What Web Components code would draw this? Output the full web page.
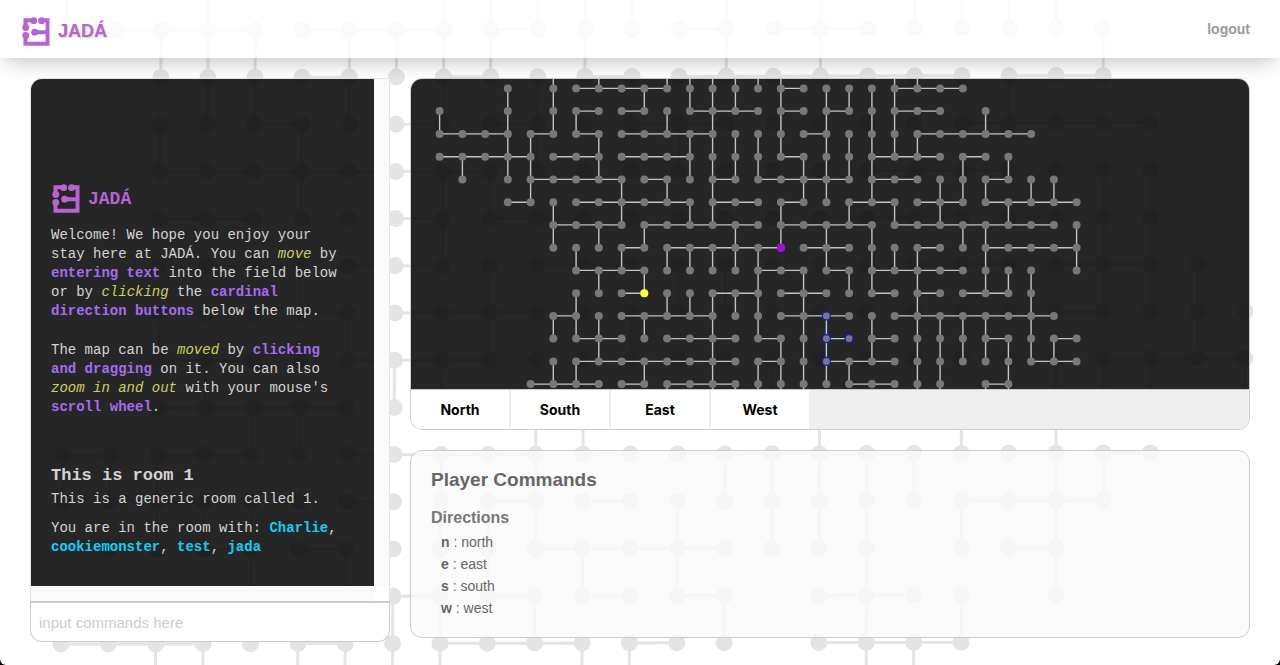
<!DOCTYPE html>
<html lang="en">
<head>
<meta charset="utf-8">
<title>JADÁ</title>
<style>
html { background: #000; }
body { margin: 0; font-family: "Liberation Sans", Arial, sans-serif; }
</style>
</head>
<body>
<jada-page>
  <jada-header slot="header"></jada-header>
  <jada-terminal slot="side">
    <jada-welcome></jada-welcome>
    <jada-room name="This is room 1" about="This is a generic room called 1." players="Charlie,cookiemonster,test,jada"></jada-room>
  </jada-terminal>
  <jada-map slot="main"></jada-map>
  <jada-commands slot="main" heading="Player Commands"></jada-commands>
</jada-page>

<script>
/* Expands "3 5-8" into [[3,3],[5,8]]. */
const ranges = text => text.split(' ').filter(Boolean).map(part => {
  const [a, b] = part.split('-').map(Number);
  return [a, b === undefined ? a : b];
});

class BaseElement extends HTMLElement {
  connectedCallback() {
    if (this.shadowRoot) return;
    this.attachShadow({ mode: 'open' }).innerHTML = this.render();
  }
}

/* Grid rows: [rooms, horizontal corridors, corridors leading down]. */
const networkPaths = (rows, point, radius) => {
  let lines = '', dots = '';
  rows.forEach(([rooms, across, down], j) => {
    ranges(across).forEach(([a, b]) => {
      const [x1, y1] = point(a, j), [x2, y2] = point(b, j);
      lines += `M${x1} ${y1}L${x2} ${y2}`;
    });
    ranges(down).forEach(([a, b]) => {
      for (let k = a; k <= b; k++) {
        const [x1, y1] = point(k, j), [x2, y2] = point(k, j + 1);
        lines += `M${x1} ${y1}L${x2} ${y2}`;
      }
    });
    ranges(rooms).forEach(([a, b]) => {
      for (let k = a; k <= b; k++) {
        const [x, y] = point(k, j);
        dots += `<circle cx="${x}" cy="${y}" r="${radius}"/>`;
      }
    });
  });
  return { lines, dots };
};

customElements.define('jada-backdrop', class extends BaseElement {
  render() {
    const rows = [
      ['', '', '0 3 8-12 14 16 18-21'],
      ['1-22', '1-4 5-8 9-10 13-14 15-17', '2-4 6-9 11 14 16 22'],
      ['2-22', '5-6 8-9 11-12 13-19 20-22', '3-4 6 8 10 20'],
      ['2-23', '4-5 7-8 9-10 12-14 19-23', '2 5 10 13'],
      ['2-23', '2-9 17-20', '5 8-9 22-23'],
      ['2-23', '2-4 7-8 9-11 16-19 20-21', '8 22-23'],
      ['2-24', '3-5 6-8 10-12 18-20 21-23', '5 9 13-14 22-24'],
      ['2-25', '5-6 7-10 21-22', '2 6 9 12 24'],
      ['2-25', '2-4 6-9 22-25', '3 7-8 15 21-23 25'],
      ['2-24', '2-6', '4-5 10-11 16 19 21'],
      ['0-23', '0-1 2-4 6-10 11-12 13-18 20-21 22-23', '0-2 8 10 14-18 21-22'],
      ['0-22', '2-3 6-7 9-10 11-12 19-22', '2-4 8-10 13 15-17 19 21'],
      ['1-17 19-21', '3-4 5-6 10-14 20-21', '4 6 9 11 13 17 21'],
      ['7-14 16-19 21', '7-8 9-10 11-12 13-14 16-18', '7-8 10 14 17 19'],
      ['0-14 16-19', '0-3 5-6 8-11 12-13 16-19', '2-3 5-8 11-12 17-18'],
    ];
    const point = (k, j) => {
      const t = (j - 1) / 13;
      return [67 - 6 * t + k * (47.1 + 0.27 * t), 30.5 + 47.2 * (j - 1) - 0.1 * k].map(n => n.toFixed(1));
    };
    const { lines, dots } = networkPaths(rows, point, 8.5);
    return `<style>
      :host { display: block; overflow: hidden; }
      svg { display: block; width: 100%; height: 100%; }
    </style>
    <svg aria-hidden="true"><path d="${lines}" stroke="#e4e4e4" stroke-width="3" fill="none"/><g fill="#e4e4e4">${dots}</g></svg>`;
  }
});

customElements.define('jada-page', class extends BaseElement {
  render() {
    return `<style>
      :host { display: block; position: relative; z-index: 0; min-height: 100vh; background: #fff; border-radius: 0 0 6px 6px; overflow: hidden; }
      jada-backdrop { position: absolute; inset: 0; z-index: -1; }
      main { display: grid; grid-template-columns: 360px 1fr; gap: 20px; align-items: start; padding: 20px 30px; }
      .main { display: flex; flex-direction: column; gap: 20px; min-width: 0; }
    </style>
    <jada-backdrop></jada-backdrop>
    <slot name="header"></slot>
    <main><slot name="side"></slot><div class="main"><slot name="main"></slot></div></main>`;
  }
});

customElements.define('jada-logo', class extends BaseElement {
  render() {
    return `<style>
      :host { display: flex; align-items: center; gap: 8px; color: #b564d2; font-size: 18px; line-height: 20px; font-weight: bold; }
      svg { width: 28px; height: 29px; flex: none; }
    </style>
    <svg viewBox="0 0 84 88" aria-hidden="true">
      <path d="M10 32V10H35M59 10H77V81H10V56M38 46H77" fill="none" stroke="currentColor" stroke-width="12"/>
      <g fill="currentColor"><circle cx="35" cy="11" r="10.5"/><circle cx="59" cy="11" r="10.5"/><circle cx="11" cy="32" r="10.5"/><circle cx="11" cy="56" r="10.5"/><circle cx="38" cy="46" r="10.5"/></g>
    </svg><span>JADÁ</span>`;
  }
});

customElements.define('jada-header', class extends BaseElement {
  render() {
    return `<style>
      :host { display: block; }
      header { display: flex; align-items: center; justify-content: space-between; box-sizing: border-box; height: 58px; padding: 0 30px 0 22px;
        background: rgba(255,255,255,.82); box-shadow: 0 10px 20px -6px rgba(0,0,0,.24); }
      jada-logo { padding-top: 4px; text-shadow: 1px 1px 2px #ccc; }
      a { color: #999; font-size: 14px; line-height: 18px; font-weight: bold; text-decoration: none; }
    </style>
    <header><jada-logo></jada-logo><a href="#logout">logout</a></header>`;
  }
});

customElements.define('jada-terminal', class extends BaseElement {
  render() {
    return `<style>
      :host { display: flex; flex-direction: column; height: calc(100vh - 101px); min-height: 500px; }
      .frame { flex: 1; min-height: 0; display: grid; grid-template: 1fr 15px / 1fr 15px; border: 1px solid #e4e4e4; border-bottom: 0;
        border-radius: 12px 0 0 0; overflow: hidden; }
      .log { display: flex; flex-direction: column; justify-content: flex-end; gap: 49px; overflow: hidden; padding: 0 33px 29px 20px;
        background: rgba(0,0,0,.85); color: #d4d4d4; font: 14px/19px "Liberation Mono", "Courier New", monospace; }
      .track { background: #fafafa; }
      .corner { background: #fff; }
      input { box-sizing: border-box; width: 100%; height: 41px; margin: 0; padding: 0 8px; border: 2px solid #ccc; border-width: 2px 1px 1px;
        border-radius: 0 0 12px 12px; background: #fff; font: 15px/20px "Liberation Sans", Arial, sans-serif; color: #444; }
      input::placeholder { color: #ccc; opacity: 1; }
    </style>
    <div class="frame"><section class="log"><slot></slot></section><div class="track"></div><div class="track"></div><div class="corner"></div></div>
    <input type="text" aria-label="Command" placeholder="input commands here">`;
  }
});

customElements.define('jada-welcome', class extends BaseElement {
  render() {
    return `<style>
      :host { display: block; }
      jada-logo { padding: 0 1px; margin-bottom: 13px; }
      p { margin: 0 0 20px; }
      p:last-child { margin: 0; }
      em { color: #cbd15f; }
      strong { color: #a56cf0; }
    </style>
    <jada-logo></jada-logo>
    <p>Welcome! We hope you enjoy your stay here at JADÁ. You can <em>move</em> by <strong>entering text</strong> into the field below or by <em>clicking</em> the <strong>cardinal direction buttons</strong> below the map.</p>
    <p>The map can be <em>moved</em> by <strong>clicking and dragging</strong> on it. You can also <em>zoom in and out</em> with your mouse's <strong>scroll wheel</strong>.</p>`;
  }
});

customElements.define('jada-room', class extends BaseElement {
  render() {
    const names = this.getAttribute('players').split(',').map(n => `<b>${n}</b>`).join(', ');
    return `<style>
      :host { display: block; }
      h2 { margin: 0 0 4px; font-size: 17px; line-height: 20px; }
      p { margin: 0 0 10px; }
      p:last-child { margin: 0; }
      b { color: #12cff5; }
    </style>
    <h2>${this.getAttribute('name')}</h2><p>${this.getAttribute('about')}</p><p>You are in the room with: ${names}</p>`;
  }
});

customElements.define('jada-map', class extends BaseElement {
  render() {
    const rows = [
      ['', '', '5 7 10-15 20-21'],
      ['3 5-23', '6-10 15-16 20-23', '3 5 9 11-13 15 17-20'],
      ['0 3 5-22 24', '6-7 8-9 11-14 15-16 17-18 20-22', '0 3 5-6 10 12 15 17 19-20 24'],
      ['0-26', '0-3 4-5 6-7 8-12 16-17 21-26', '3-4 7 11-15 17-21'],
      ['0-25', '0-4 5-7 8-11 15-16 19-22 23-24', '1 3-4 7 11-14 16-19 23 25'],
      ['1 3-27', '4-8 9-10 12-13 14-18 19-21 24-25', '4 8 10 12 16-17 19 22-24 26-27'],
      ['3-28', '3-4 6-11 12-14 15-16 18-20 21-23 24-28', '5 8 11-12 15 18 20 22 25'],
      ['5-28', '5-8 9-14 15-19 20-27', '5 7 9 13 15 17 19 23-24 28'],
      ['5-28', '8-9 10-15 16-18 21-22 24-28', '6 8 10-14 17 19-21 24 28'],
      ['6-26 28', '6-9 14-16 17-18 19-23', '7 9 14 16 18-19 21 24-26'],
      ['6-26', '8-9 12-14 15-17 19-20 21-22 23-25', '6 10-14 16 21 26'],
      ['5-27', '5-6 8-12 15-18 20-27', '5-7 9 12 14 16 19 21-24 26'],
      ['5-28', '6-8 10-13 14-15 19-20 24-25 27-28', '7 12 15-16 19 21-27'],
      ['5-28', '6-13 14-15 17-20 26-28', '5-6 9 12 14-18 21-22 25'],
      ['4-22 24-25', '4-7 8-9 10-13 18-20 24-25', '10 12-16 21-22 24-25'],
    ];
    const point = (k, j) => [(28.6 + 22.75 * k).toFixed(1), (9.4 + 22.75 * (j - 1)).toFixed(1)];
    const { lines, dots } = networkPaths(rows, point, 4);
    const at = (k, j) => { const [x, y] = point(k, j); return `cx="${x}" cy="${y}"`; };
    const seen = `M${point(17, 11).join(' ')}L${point(17, 13).join(' ')}M${point(17, 12).join(' ')}L${point(18, 12).join(' ')}`;
    return `<style>
      :host { display: block; border: 1px solid #ccc; border-radius: 12px; overflow: hidden; }
      svg { display: block; width: 100%; height: calc(100vh - 355px); min-height: 240px; background: rgba(0,0,0,.85); }
      nav { display: flex; gap: 2px; height: 39px; border-top: 1px solid #ccc; background: #eee; }
      button { width: 98px; margin: 0; padding: 0; border: 0; background: #fff; color: #000; font: 700 14px/20px Inter, sans-serif; }
    </style>
    <svg role="img" aria-label="Map of rooms">
      <path d="${lines}" stroke="#c4c4c4" stroke-width="1.4" fill="none"/>
      <path d="${seen}" stroke="#add8e6" stroke-width="1.4" fill="none"/>
      <g fill="#787878">${dots}</g>
      <g fill="#787878" stroke="#1414e0" stroke-width="1.2"><circle ${at(17, 11)} r="4"/><circle ${at(17, 12)} r="4"/><circle ${at(18, 12)} r="4"/><circle ${at(17, 13)} r="4"/></g>
      <circle ${at(15, 8)} r="4" fill="#a80ae0"/><circle ${at(9, 10)} r="4" fill="#ffff3c"/>
    </svg>
    <nav aria-label="Directions"><button>North</button><button>South</button><button>East</button><button>West</button></nav>`;
  }
});

customElements.define('jada-commands', class extends BaseElement {
  render() {
    const items = [['n', 'north'], ['e', 'east'], ['s', 'south'], ['w', 'west']];
    return `<style>
      :host { display: block; padding: 18px 20px; border: 1px solid #ccc; border-radius: 12px; background: rgba(250,250,250,.8); color: #666; }
      h2 { margin: 0 0 17px; font-size: 19px; line-height: 22px; }
      h3 { margin: 0 0 3px; font-size: 16px; line-height: 20px; color: #777; }
      ul { margin: 0; padding: 0 10px; list-style: none; font-size: 14px; line-height: 22px; }
    </style>
    <h2>${this.getAttribute('heading')}</h2>
    <h3>Directions</h3>
    <ul>${items.map(([k, v]) => `<li><b>${k}</b> : ${v}</li>`).join('')}</ul>`;
  }
});
</script>
</body>
</html>
